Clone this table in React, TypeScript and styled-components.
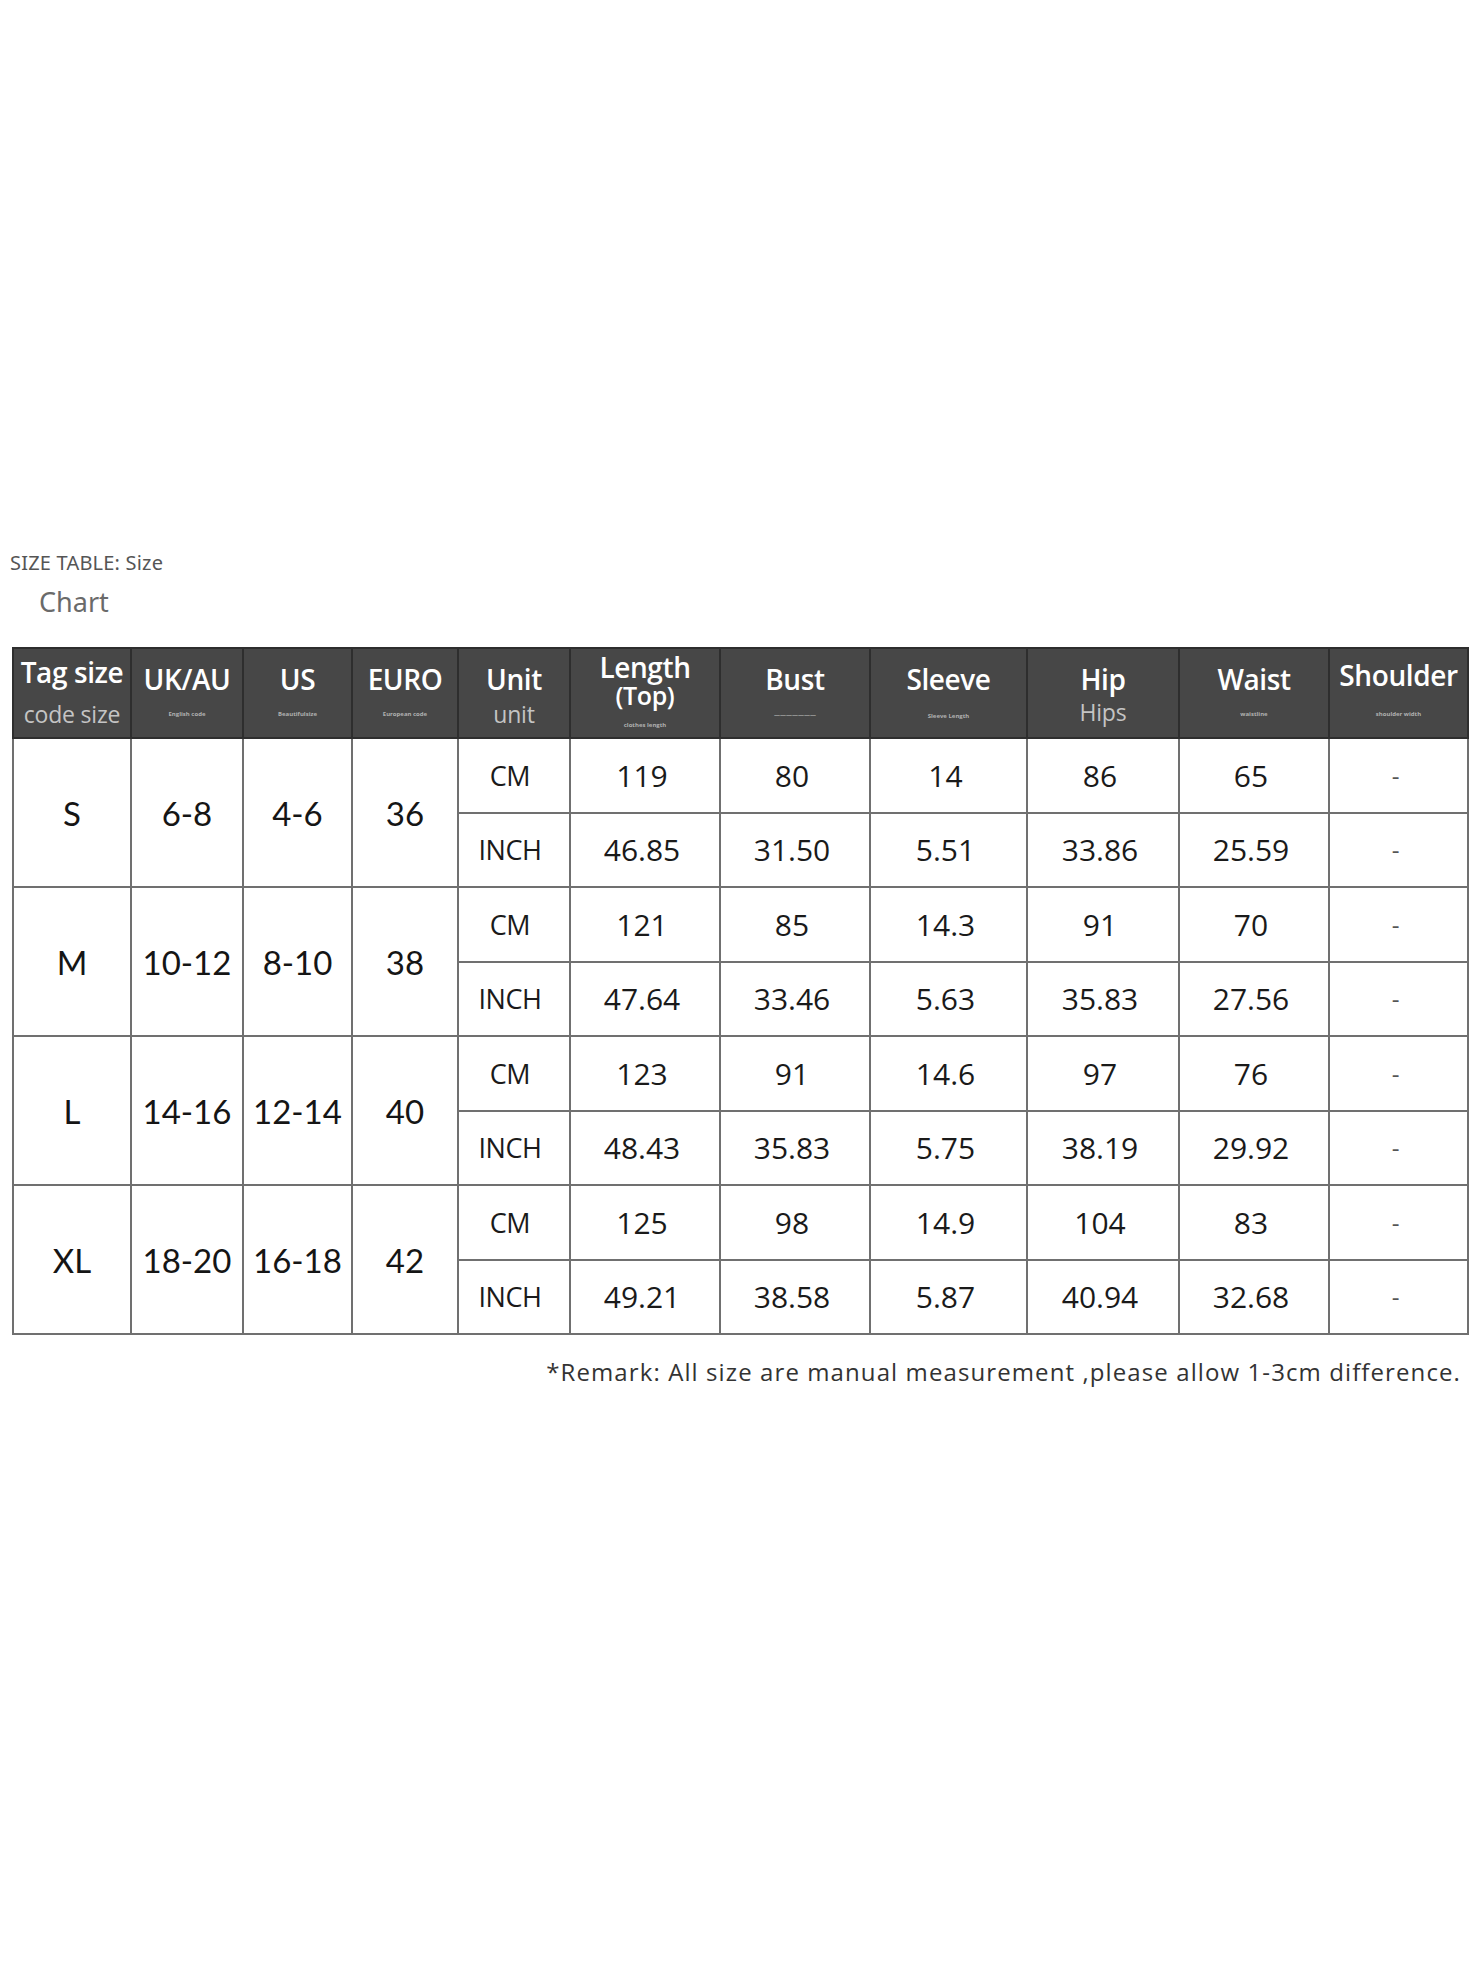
import React from "react";
import styled, { createGlobalStyle } from "styled-components";

const Global = createGlobalStyle`
  html, body { margin: 0; padding: 0; background: #ffffff; }
  body { font-family: "Open Sans", "Liberation Sans", sans-serif; }
`;

const Page = styled.div`
  width: 1482px;
  height: 1966px;
  padding-top: 550px;
  box-sizing: border-box;
`;

const Caption = styled.div`
  margin-left: 10px;
  font-family: "Noto Sans", "Open Sans", sans-serif;
  font-size: 20px;
  line-height: 26px;
  color: #555;
  letter-spacing: 0.2px;
`;

const CaptionSecond = styled.div`
  margin-left: 39px;
  margin-top: 10px;
  font-family: "Noto Sans", "Open Sans", sans-serif;
  font-size: 27px;
  line-height: 32px;
  color: #6a6a6a;
`;

const Table = styled.table`
  margin: 29px 0 0 12px;
  width: 1455px;
  table-layout: fixed;
  border-collapse: collapse;
`;

const HeadRow = styled.tr`
  height: 90px;
  background: #474747;
`;

const HeadCell = styled.th`
  vertical-align: top;
  padding: 0;
  border: 2px solid #2e2e2e;
  color: #fff;
  text-align: center;
  font-weight: normal;
  overflow: hidden;
`;

const HeadTitle = styled.div<{ $mt: number; $small?: boolean }>`
  margin-top: ${(p) => p.$mt}px;
  font-family: "Open Sans", sans-serif;
  font-weight: 600;
  font-size: ${(p) => (p.$small ? 25 : 28)}px;
  line-height: 28px;
  letter-spacing: -0.4px;
  white-space: nowrap;
`;

const HeadSub = styled.div<{ $mt: number }>`
  margin-top: ${(p) => p.$mt}px;
  font-family: "Open Sans", sans-serif;
  font-size: 23px;
  line-height: 26px;
  color: #c4c4c4;
  letter-spacing: -0.2px;
  white-space: nowrap;
`;

const HeadTiny = styled.div<{ $mt: number }>`
  margin-top: ${(p) => p.$mt}px;
  font-family: "Open Sans", sans-serif;
  font-size: 6px;
  line-height: 8px;
  font-weight: 700;
  color: #b0b0b0;
  white-space: nowrap;
`;

const BodyRow = styled.tr`
  height: 74.5px;
`;

const SizeCell = styled.td`
  border: 2px solid #707070;
  text-align: center;
  vertical-align: middle;
  padding: 0;
  font-family: "Lato", "Open Sans", sans-serif;
  font-size: 33px;
  color: #151515;
  white-space: nowrap;
`;

const UnitCell = styled.td`
  border: 2px solid #707070;
  text-align: center;
  vertical-align: middle;
  padding: 0 8px 0 0;
  font-family: "Open Sans", sans-serif;
  font-weight: 500;
  font-size: 27px;
  letter-spacing: -0.4px;
  color: #1a1a1a;
`;

const ValueCell = styled.td<{ $dim?: boolean }>`
  border: 2px solid #707070;
  text-align: center;
  vertical-align: middle;
  padding: 0 6px 0 0;
  font-family: "Open Sans", sans-serif;
  font-size: ${(p) => (p.$dim ? 24 : 30)}px;
  letter-spacing: 0px;
  color: ${(p) => (p.$dim ? "#555" : "#1a1a1a")};
`;

const Remark = styled.div`
  width: 1449px;
  margin: 22px 0 0 12px;
  text-align: right;
  font-family: "Open Sans", sans-serif;
  font-size: 24px;
  line-height: 30px;
  color: #333;
  letter-spacing: 1.1px;
`;

type Col = {
  w: number;
  title: string[];
  titleTop: number;
  sub?: string;
  subTop: number;
  tiny?: boolean;
};

const cols: Col[] = [
  { w: 118, title: ["Tag size"], titleTop: 9, sub: "code size", subTop: 15 },
  { w: 112, title: ["UK/AU"], titleTop: 16, sub: "English code", subTop: 17, tiny: true },
  { w: 109, title: ["US"], titleTop: 16, sub: "Beautifulsize", subTop: 17, tiny: true },
  { w: 106, title: ["EURO"], titleTop: 16, sub: "European code", subTop: 17, tiny: true },
  { w: 112, title: ["Unit"], titleTop: 16, sub: "unit", subTop: 8 },
  { w: 150, title: ["Length", "(Top)"], titleTop: 4, sub: "clothes length", subTop: 12, tiny: true },
  { w: 150, title: ["Bust"], titleTop: 16, sub: "———————", subTop: 18, tiny: true },
  { w: 157, title: ["Sleeve"], titleTop: 16, sub: "Sleeve Length", subTop: 19, tiny: true },
  { w: 152, title: ["Hip"], titleTop: 16, sub: "Hips", subTop: 6 },
  { w: 150, title: ["Waist"], titleTop: 16, sub: "waistline", subTop: 17, tiny: true },
  { w: 139, title: ["Shoulder"], titleTop: 12, sub: "shoulder width", subTop: 21, tiny: true },
];

type SizeRow = {
  tag: string;
  uk: string;
  us: string;
  eu: string;
  cm: string[];
  inch: string[];
};

const rows: SizeRow[] = [
  { tag: "S", uk: "6-8", us: "4-6", eu: "36", cm: ["119", "80", "14", "86", "65"], inch: ["46.85", "31.50", "5.51", "33.86", "25.59"] },
  { tag: "M", uk: "10-12", us: "8-10", eu: "38", cm: ["121", "85", "14.3", "91", "70"], inch: ["47.64", "33.46", "5.63", "35.83", "27.56"] },
  { tag: "L", uk: "14-16", us: "12-14", eu: "40", cm: ["123", "91", "14.6", "97", "76"], inch: ["48.43", "35.83", "5.75", "38.19", "29.92"] },
  { tag: "XL", uk: "18-20", us: "16-18", eu: "42", cm: ["125", "98", "14.9", "104", "83"], inch: ["49.21", "38.58", "5.87", "40.94", "32.68"] },
];

export default function App() {
  return (
    <>
      <Global />
      <Page>
        <Caption>SIZE TABLE: Size</Caption>
        <CaptionSecond>Chart</CaptionSecond>
        <Table>
          <colgroup>
            {cols.map((c, i) => (
              <col key={i} style={{ width: c.w }} />
            ))}
          </colgroup>
          <thead>
            <HeadRow>
              {cols.map((c, i) => (
                <HeadCell key={i}>
                  {c.title.map((t, j) => (
                    <HeadTitle key={j} $mt={j === 0 ? c.titleTop : 0} $small={j > 0}>
                      {t}
                    </HeadTitle>
                  ))}
                  {c.sub &&
                    (c.tiny ? (
                      <HeadTiny $mt={c.subTop}>{c.sub}</HeadTiny>
                    ) : (
                      <HeadSub $mt={c.subTop}>{c.sub}</HeadSub>
                    ))}
                </HeadCell>
              ))}
            </HeadRow>
          </thead>
          <tbody>
            {rows.map((r) => (
              <React.Fragment key={r.tag}>
                <BodyRow>
                  <SizeCell rowSpan={2}>{r.tag}</SizeCell>
                  <SizeCell rowSpan={2}>{r.uk}</SizeCell>
                  <SizeCell rowSpan={2}>{r.us}</SizeCell>
                  <SizeCell rowSpan={2}>{r.eu}</SizeCell>
                  <UnitCell>CM</UnitCell>
                  {r.cm.map((v, i) => (
                    <ValueCell key={i}>{v}</ValueCell>
                  ))}
                  <ValueCell $dim>-</ValueCell>
                </BodyRow>
                <BodyRow>
                  <UnitCell>INCH</UnitCell>
                  {r.inch.map((v, i) => (
                    <ValueCell key={i}>{v}</ValueCell>
                  ))}
                  <ValueCell $dim>-</ValueCell>
                </BodyRow>
              </React.Fragment>
            ))}
          </tbody>
        </Table>
        <Remark>*Remark: All size are manual measurement ,please allow 1-3cm difference.</Remark>
      </Page>
    </>
  );
}
